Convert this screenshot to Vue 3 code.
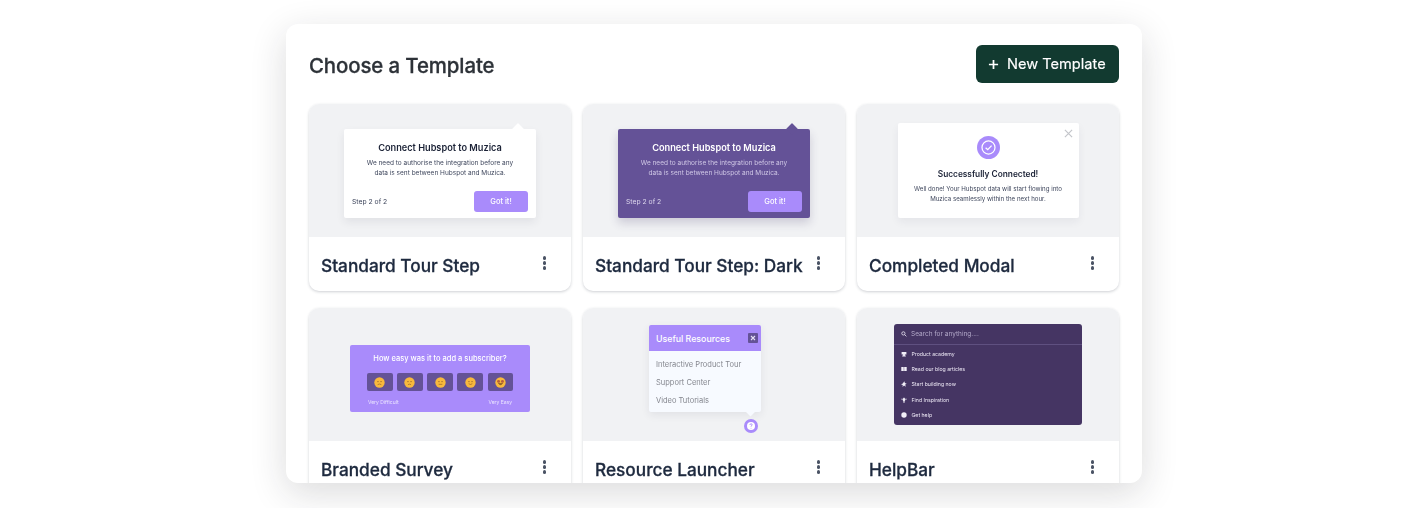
<script setup>
const resources = ['Interactive Product Tour', 'Support Center', 'Video Tutorials']
const help = [
  { label: 'Product academy', icon: 'M1 1.500h8v4.500H1zM3.500 6h3v1.500h1.500V9H2V7.500h1.500z' },
  { label: 'Read our blog articles', icon: 'M.5 1.500h4l.2 7h-4.200zM5.300 1.500h4.200v7H5.300z' },
  { label: 'Start building now', icon: 'M5.500 .5l1 3 3 1-2.500 1.500 1 3.500-3-2-2.500 2.500.5-3.500-3-1 3-1.500z' },
  { label: 'Find Inspiration', icon: 'M5 1.500a2.500 2.500 0 0 1 1.500 4.500V7.500h-3V6A2.500 2.500 0 0 1 5 1.500zM4 8h2v1.500H4zM.5 3h1.500v1H.5zM8 3h1.500v1H8zM4.500 0h1v1h-1z' },
  { label: 'Get help', icon: 'M5 .5a4.500 4.500 0 1 1 0 9a4.500 4.500 0 0 1 0-9z' }
]
const faces = [
  { mouth: 'M6 12.500q3-2 6 0' },
  { mouth: 'M6.500 12.500q2.500-1.500 5 0' },
  { mouth: 'M6 12h6' },
  { mouth: 'M6 11q3 2.500 6 0' },
  { mouth: 'M5.500 10.500q3.500 4.500 7 0z', star: true }
]
</script>

<template>
  <div class="page">
    <main class="panel">
      <header class="head">
        <h1 class="title">Choose a Template</h1>
        <button class="new-btn">
          <svg class="plus" viewBox="0 0 12 12"><path d="M6 1v10M1 6h10" /></svg>
          New Template
        </button>
      </header>

      <section class="grid">
        <article class="card">
          <div class="preview tour-wrap">
            <div class="tour">
              <span class="arrow"></span>
              <b class="tour-title">Connect Hubspot to Muzica</b>
              <p class="tour-text">We need to authorise the integration before any<br>data is sent between Hubspot and Muzica.</p>
              <div class="tour-foot"><span>Step 2 of 2</span><span class="got">Got it!</span></div>
            </div>
          </div>
          <div class="foot"><span class="name">Standard Tour Step</span><span class="dots"><i></i><i></i><i></i></span></div>
        </article>

        <article class="card">
          <div class="preview tour-wrap">
            <div class="tour dark">
              <span class="arrow"></span>
              <b class="tour-title">Connect Hubspot to Muzica</b>
              <p class="tour-text">We need to authorise the integration before any<br>data is sent between Hubspot and Muzica.</p>
              <div class="tour-foot"><span>Step 2 of 2</span><span class="got">Got it!</span></div>
            </div>
          </div>
          <div class="foot"><span class="name">Standard Tour Step: Dark</span><span class="dots"><i></i><i></i><i></i></span></div>
        </article>

        <article class="card">
          <div class="preview modal-wrap">
            <div class="modal">
              <svg class="close" viewBox="0 0 10 10"><path d="M1 1l8 8M9 1l-8 8" /></svg>
              <svg class="check" viewBox="0 0 24 24">
                <circle cx="12" cy="12" r="12" fill="#a98bfb" />
                <circle cx="12" cy="12" r="6.800" fill="none" stroke="#fff" stroke-width="1.300" />
                <path d="M9 12.200l2.200 2.100 4-4.300" fill="none" stroke="#fff" stroke-width="1.300" />
              </svg>
              <b class="modal-title">Successfully Connected!</b>
              <p class="modal-text">Well done! Your Hubspot data will start flowing into<br>Muzica seamlessly within the next hour.</p>
            </div>
          </div>
          <div class="foot"><span class="name">Completed Modal</span><span class="dots"><i></i><i></i><i></i></span></div>
        </article>

        <article class="card">
          <div class="preview survey-wrap">
            <div class="survey">
              <b class="survey-title">How easy was it to add a subscriber?</b>
              <div class="faces">
                <span v-for="(f, i) in faces" :key="i" class="face">
                  <svg viewBox="0 0 18 18">
                    <circle cx="9" cy="9" r="8.500" fill="#f8b93c" />
                    <template v-if="f.star">
                      <circle cx="5.800" cy="7.200" r="2.400" fill="#b9603a" />
                      <circle cx="12.200" cy="7.200" r="2.400" fill="#b9603a" />
                    </template>
                    <template v-else>
                      <circle cx="6.500" cy="7.500" r="1" fill="#8a5a2b" />
                      <circle cx="11.500" cy="7.500" r="1" fill="#8a5a2b" />
                    </template>
                    <path :d="f.mouth" :fill="f.star ? '#6e4526' : 'none'" stroke="#8a5a2b" stroke-width="1" />
                  </svg>
                </span>
              </div>
              <div class="survey-foot"><span>Very Difficult</span><span>Very Easy</span></div>
            </div>
          </div>
          <div class="foot"><span class="name">Branded Survey</span><span class="dots"><i></i><i></i><i></i></span></div>
        </article>

        <article class="card">
          <div class="preview res-wrap">
            <div class="res">
              <div class="res-head">
                <span>Useful Resources</span>
                <span class="res-x"><svg viewBox="0 0 10 10"><path d="M3 3l4 4M7 3l-4 4" /></svg></span>
              </div>
              <ul class="res-list"><li v-for="r in resources" :key="r">{{ r }}</li></ul>
              <span class="res-arrow"></span>
            </div>
            <svg class="res-q" viewBox="0 0 14 14">
              <circle cx="7" cy="7" r="7" fill="#a98bfb" />
              <circle cx="7" cy="7" r="4" fill="#fff" />
              <path d="M5.800 6q.2-1.200 1.300-1.200 1.200.1 1.100 1.100-.1.700-1.200 1.200v.5M7 8.900v.6" fill="none" stroke="#a98bfb" stroke-width=".9" />
            </svg>
          </div>
          <div class="foot"><span class="name">Resource Launcher</span><span class="dots"><i></i><i></i><i></i></span></div>
        </article>

        <article class="card">
          <div class="preview help-wrap">
            <div class="help">
              <div class="help-search">
                <svg viewBox="0 0 10 10"><circle cx="4" cy="4" r="2.700" /><path d="M6 6l3 3" /></svg>
                <span>Search for anything....</span>
              </div>
              <ul class="help-list">
                <li v-for="h in help" :key="h.label">
                  <svg viewBox="0 0 10 10"><path :d="h.icon" /></svg>
                  <span>{{ h.label }}</span>
                </li>
              </ul>
            </div>
          </div>
          <div class="foot"><span class="name">HelpBar</span><span class="dots"><i></i><i></i><i></i></span></div>
        </article>
      </section>
    </main>
  </div>
</template>

<style>
html, body { margin: 0; background: #fff; }
</style>

<style scoped>
* { box-sizing: border-box; }
.page { height: 508px; padding: 24px 0 0 286px; overflow: hidden; }
.panel {
  width: 856px; height: 459px; padding: 21px 23px 0;
  background: #fff; border-radius: 12px; overflow: hidden;
  box-shadow: 0 10px 36px rgba(30, 30, 40, .16);
  font-family: "Inter", "Liberation Sans", sans-serif;
}
.head { display: flex; justify-content: space-between; align-items: center; height: 38px; margin-bottom: 21px; filter: blur(.2px); }
.title { margin: 0; padding-top: 2px; font-size: 20.400px; font-weight: 500; color: #2d3238; letter-spacing: -.1px; -webkit-text-stroke: .3px #2d3238; }
.new-btn {
  display: flex; align-items: center; gap: 8px; width: 143px; height: 38px; padding: 0 12px;
  border: 0; border-radius: 6px; background: #123a30; color: #fff;
  font: 400 14.600px "Inter", sans-serif; white-space: nowrap; -webkit-text-stroke: .15px #fff;
}
.plus { width: 11px; height: 11px; flex: none; fill: none; stroke: #fff; stroke-width: 1.900; }
.grid { display: grid; grid-template-columns: repeat(3, 262px); gap: 17px 12px; }
.card { height: 187px; background: #fff; border-radius: 10px; overflow: hidden; box-shadow: 0 1px 3px rgba(30, 40, 60, .22); }
.preview { position: relative; height: 133px; background: #f1f2f4; display: flex; justify-content: center; align-items: flex-start; }
.preview > * { filter: blur(.3px); }
.foot { display: flex; align-items: center; justify-content: space-between; height: 54px; padding: 2px 25px 0 12px; filter: blur(.2px); }
.name { font-size: 17.250px; font-weight: 500; color: #1e2a3f; white-space: nowrap; -webkit-text-stroke: .3px #1e2a3f; }
.dots { display: flex; flex-direction: column; gap: 1.400px; margin-top: -4px; }
.dots i { display: block; width: 3.500px; height: 3.500px; border-radius: 50%; background: #4a5364; }

.tour-wrap { padding-top: 25px; }
.tour { position: relative; width: 192px; height: 89px; padding-top: 13px; background: #fff; border-radius: 2px; text-align: center; color: #1b2236; box-shadow: 0 4px 8px rgba(40, 40, 60, .08); display: flex; flex-direction: column; }
.arrow { position: absolute; top: -6px; right: 12px; width: 12px; height: 12px; background: inherit; transform: rotate(45deg) scale(.7); border-radius: 1px; }
.tour-title { font-size: 9.200px; font-weight: 600; line-height: 12px; white-space: nowrap; }
.tour-text { margin: 3.500px 0 0; font-size: 6.500px; line-height: 10px; color: #3f475d; white-space: nowrap; }
.tour-foot { display: flex; justify-content: space-between; align-items: center; margin: auto 8px 6px; font-size: 6.800px; color: #3f475d; }
.got { width: 54px; height: 21px; line-height: 21px; border-radius: 3px; background: #a98bfb; color: #fff; font-size: 7.500px; font-weight: 500; }
.dark { background: #645297; color: #fff; box-shadow: 0 5px 10px rgba(60, 50, 100, .2); }
.dark .tour-text { color: #d0c8e6; }
.dark .tour-foot { color: #dcd6ec; }

.modal-wrap { padding-top: 19px; }
.modal { position: relative; width: 181px; height: 95px; padding-top: 13px; background: #fff; border-radius: 2px; text-align: center; display: flex; flex-direction: column; align-items: center; color: #1b2236; box-shadow: 0 4px 8px rgba(40, 40, 60, .06); }
.close { position: absolute; top: 6px; right: 6px; width: 9px; height: 9px; fill: none; stroke: #c3c5ca; stroke-width: 1.300; }
.check { width: 23px; height: 23px; margin-bottom: 9px; }
.modal-title { font-size: 8.300px; font-weight: 600; line-height: 12px; white-space: nowrap; }
.modal-text { margin: 3.500px 0 0; font-size: 6.150px; line-height: 10px; color: #3f475d; white-space: nowrap; }

.survey-wrap { padding-top: 37px; }
.survey { width: 180px; height: 67px; padding: 9px 17px 0; background: #a98bfb; border-radius: 2px; color: #fff; text-align: center; display: flex; flex-direction: column; }
.survey-title { font-size: 7.500px; font-weight: 500; line-height: 10px; white-space: nowrap; }
.faces { display: flex; justify-content: space-between; margin-top: 9px; }
.face { width: 25.500px; height: 18px; border-radius: 2px; background: #645297; display: flex; align-items: center; justify-content: center; }
.face svg { width: 11px; height: 11px; }
.survey-foot { display: flex; justify-content: space-between; margin: 8px 1px 0; font-size: 5px; color: #ece6ff; }

.res-wrap { padding-top: 17px; }
.res { position: relative; width: 112px; height: 87px; margin-left: -18px; background: #f7faff; border-radius: 2px; box-shadow: 0 3px 8px rgba(40, 40, 60, .08); }
.res-head { display: flex; align-items: center; justify-content: space-between; height: 26px; padding: 0 3px 0 7px; background: #a98bfb; color: #fff; font-size: 8.800px; font-weight: 500; border-radius: 2px 2px 0 0; }
.res-x { width: 10px; height: 10px; background: #645297; border-radius: 1px; }
.res-x svg { display: block; fill: none; stroke: #e6e0f5; stroke-width: 1.100; }
.res-list { list-style: none; margin: 0; padding: 5px 7px; font-size: 7.500px; color: #85878f; }
.res-list li { height: 18px; line-height: 18px; white-space: nowrap; }
.res-arrow { position: absolute; right: 7px; bottom: -3px; width: 7px; height: 7px; background: #f7faff; transform: rotate(45deg); }
.res-q { position: absolute; left: 161px; top: 111px; width: 14px; height: 14px; }

.help-wrap { padding-top: 16px; }
.help { width: 188px; height: 101px; background: #453563; border-radius: 3px; color: #eee9f6; }
.help-search { display: flex; align-items: center; gap: 4px; height: 21px; padding: 0 7px; border-bottom: 1px solid #5f5080; font-size: 6.500px; color: #b3a9c9; }
.help-search svg { width: 6px; height: 6px; fill: none; stroke: #e6e1ef; stroke-width: 1.400; }
.help-list { list-style: none; margin: 0; padding: 1px 0 0 7px; font-size: 5.200px; }
.help-list li { display: flex; align-items: center; gap: 4.500px; height: 15.300px; }
.help-list svg { width: 6px; height: 6px; fill: #f2eff8; }
</style>
